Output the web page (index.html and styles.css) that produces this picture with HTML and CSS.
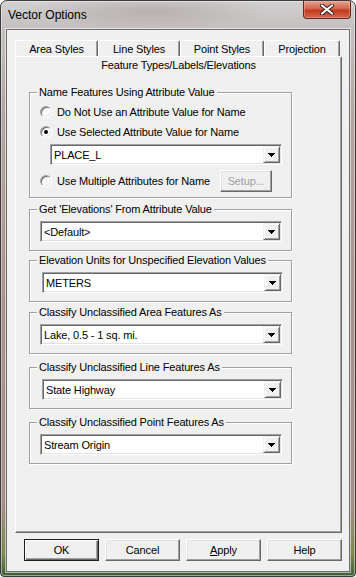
FILE: index.html
```html
<!DOCTYPE html>
<html lang="en">
<head>
    <meta charset="UTF-8">
    <meta name="viewport" content="width=device-width, initial-scale=1.0">
    <title>Vector Options</title>
    <link rel="stylesheet" href="styles.css">
</head>
<body>
    <div class="window">
        <div class="titlebar">
            <span class="title">Vector Options</span>
            <button class="close" aria-label="Close">
                <svg width="14" height="11" viewBox="0 0 14 11">
                    <path d="M2 1.5l10 8M12 1.5l-10 8" stroke="#3a1d18" stroke-width="4" stroke-linecap="round"/>
                    <path d="M2 1.5l10 8M12 1.5l-10 8" stroke="#fff" stroke-width="2.2" stroke-linecap="round"/>
                </svg>
            </button>
        </div>

        <div class="client">
            <div class="tabs">
                <div class="tab-row back">
                    <div class="tab">Area Styles</div>
                    <div class="tab">Line Styles</div>
                    <div class="tab">Point Styles</div>
                    <div class="tab">Projection</div>
                </div>
                <div class="tab-row front">
                    <div class="tab active">Feature Types/Labels/Elevations</div>
                </div>

                <div class="panel">
                    <fieldset class="group group-names">
                        <legend>Name Features Using Attribute Value</legend>
                        <div class="radio-row first">
                            <span class="radio"></span>
                            <span>Do Not Use an Attribute Value for Name</span>
                        </div>
                        <div class="radio-row">
                            <span class="radio checked"></span>
                            <span>Use Selected Attribute Value for Name</span>
                        </div>
                        <div class="combo indent">
                            <span class="combo-value">PLACE_L</span>
                            <span class="combo-arrow"><svg width="7" height="4" viewBox="0 0 7 4"><path d="M0 0h7v1h-1v1h-1v1h-1v1h-1v-1h-1v-1h-1v-1h-1z"/></svg></span>
                        </div>
                        <div class="radio-row multi">
                            <span class="radio"></span>
                            <span>Use Multiple Attributes for Name</span>
                            <button class="btn setup" disabled>Setup...</button>
                        </div>
                    </fieldset>

                    <fieldset class="group">
                        <legend>Get 'Elevations' From Attribute Value</legend>
                        <div class="combo">
                            <span class="combo-value">&lt;Default&gt;</span>
                            <span class="combo-arrow"><svg width="7" height="4" viewBox="0 0 7 4"><path d="M0 0h7v1h-1v1h-1v1h-1v1h-1v-1h-1v-1h-1v-1h-1z"/></svg></span>
                        </div>
                    </fieldset>

                    <fieldset class="group">
                        <legend>Elevation Units for Unspecified Elevation Values</legend>
                        <div class="combo shifted">
                            <span class="combo-value">METERS</span>
                            <span class="combo-arrow"><svg width="7" height="4" viewBox="0 0 7 4"><path d="M0 0h7v1h-1v1h-1v1h-1v1h-1v-1h-1v-1h-1v-1h-1z"/></svg></span>
                        </div>
                    </fieldset>

                    <fieldset class="group">
                        <legend>Classify Unclassified Area Features As</legend>
                        <div class="combo">
                            <span class="combo-value">Lake, 0.5 - 1 sq. mi.</span>
                            <span class="combo-arrow"><svg width="7" height="4" viewBox="0 0 7 4"><path d="M0 0h7v1h-1v1h-1v1h-1v1h-1v-1h-1v-1h-1v-1h-1z"/></svg></span>
                        </div>
                    </fieldset>

                    <fieldset class="group">
                        <legend>Classify Unclassified Line Features As</legend>
                        <div class="combo shifted">
                            <span class="combo-value">State Highway</span>
                            <span class="combo-arrow"><svg width="7" height="4" viewBox="0 0 7 4"><path d="M0 0h7v1h-1v1h-1v1h-1v1h-1v-1h-1v-1h-1v-1h-1z"/></svg></span>
                        </div>
                    </fieldset>

                    <fieldset class="group">
                        <legend>Classify Unclassified Point Features As</legend>
                        <div class="combo">
                            <span class="combo-value">Stream Origin</span>
                            <span class="combo-arrow"><svg width="7" height="4" viewBox="0 0 7 4"><path d="M0 0h7v1h-1v1h-1v1h-1v1h-1v-1h-1v-1h-1v-1h-1z"/></svg></span>
                        </div>
                    </fieldset>
                </div>
            </div>

            <div class="buttons">
                <button class="btn default">OK</button>
                <button class="btn">Cancel</button>
                <button class="btn"><u>A</u>pply</button>
                <button class="btn">Help</button>
            </div>
        </div>
    </div>
</body>
</html>
```

FILE: styles.css
```css
* {
    box-sizing: border-box;
}

body {
    margin: 0;
    font-family: "Liberation Sans", Arial, sans-serif;
    font-size: 11px;
    letter-spacing: -0.15px;
    color: #000;
}

/* Aero glass frame */
.window {
    width: 356px;
    height: 577px;
    display: flex;
    flex-direction: column;
    padding: 0 5px 4px;
    border: 1px solid #3b3b3b;
    border-radius: 7px 7px 4px 4px;
    background:
        radial-gradient(ellipse 120px 18px at 150px 10px, rgba(140, 130, 125, 0.35), transparent),
        linear-gradient(180deg, #d2d0d1 0%, #c4bfbe 5%, #b3a5a0 20%, #a8928b 55%, #a38d86 88%, #7f8a4e 96%, #3f5f3a 100%);
    box-shadow: inset 0 0 0 1px rgba(255, 255, 255, 0.45);
}

.titlebar {
    height: 28px;
    display: flex;
    justify-content: space-between;
    align-items: flex-start;
    padding-left: 2px;
}

.title {
    margin-top: 7px;
    font-size: 12px;
    line-height: 14px;
    letter-spacing: 0;
}

.close {
    width: 48px;
    height: 18px;
    margin-right: -1px;
    padding: 0;
    display: flex;
    align-items: center;
    justify-content: center;
    border: 1px solid #5b2a22;
    border-top: none;
    border-radius: 0 0 4px 4px;
    background: linear-gradient(180deg, #e6a595 0%, #d3634c 45%, #c1391f 55%, #d26a52 100%);
    box-shadow: inset 0 0 0 1px rgba(255, 200, 190, 0.35);
}

/* Dialog client area */
.client {
    flex: 1;
    display: flex;
    flex-direction: column;
    padding: 10px 7px 10px 8px;
    background: #f0f0f0;
    border: 1px solid #6e6e6e;
    box-shadow: 0 0 0 1px rgba(255, 255, 255, 0.55);
}

.tabs {
    display: flex;
    flex-direction: column;
}

.tab-row {
    display: flex;
}

.tab {
    display: flex;
    align-items: center;
    justify-content: center;
    background: #f0f0f0;
    border-top: 1px solid #fff;
    border-left: 1px solid #fff;
    border-right: 1px solid #696969;
    border-radius: 2px 2px 0 0;
    box-shadow: inset -1px 0 #a0a0a0;
}

.back {
    height: 16px;
}

.back .tab:nth-child(1) { width: 83px; }
.back .tab:nth-child(2) { width: 82px; }
.back .tab:nth-child(3) { width: 84px; }
.back .tab:nth-child(4) { width: 76px; }

.front {
    height: 17px;
}

.tab.active {
    width: 100%;
    padding-bottom: 1px;
}

.panel {
    height: 460px;
    display: flex;
    flex-direction: column;
    padding: 12px 0 0 13px;
    border-left: 1px solid #fff;
    border-right: 1px solid #696969;
    border-bottom: 1px solid #696969;
    box-shadow: inset -1px -1px #a0a0a0;
}

/* Group boxes */
.group {
    width: 263px;
    min-width: 0;
    margin: 0;
    padding: 0 0 8px;
    border: 1px solid #a0a0a0;
    box-shadow: inset 1px 1px #fff, 1px 1px #fff;
}

.group legend {
    margin-left: 7px;
    padding: 0 2px;
    line-height: 14px;
    background: #f0f0f0;
}

.panel .group:nth-child(2) { margin-top: 4px; }
.panel .group:nth-child(3) { margin-top: 2px; }
.panel .group:nth-child(4) { margin-top: 3px; }
.panel .group:nth-child(5) { margin-top: 6px; }
.panel .group:nth-child(6) { margin-top: 6px; }

.group-names {
    padding-bottom: 5px;
}

.radio-row {
    height: 18px;
    margin-top: 2px;
    padding-left: 10px;
    display: flex;
    align-items: center;
    gap: 5px;
}

.radio-row.first {
    margin-top: 4px;
}

.radio-row.multi {
    height: 22px;
    margin-top: 5px;
    padding-right: 19px;
}

.radio {
    position: relative;
    width: 12px;
    height: 12px;
    flex: none;
    border-radius: 50%;
    background: #fff;
    border: 1px solid;
    border-color: #a0a0a0 #fff #fff #a0a0a0;
    box-shadow: inset 1px 1px #696969, inset -1px -1px #e3e3e3;
}

.radio.checked::after {
    content: '';
    position: absolute;
    left: 3px;
    top: 3px;
    width: 4px;
    height: 4px;
    border-radius: 50%;
    background: #000;
}

/* Combo boxes */
.combo {
    height: 21px;
    margin: 5px 9px 0 10px;
    padding: 1px;
    display: flex;
    background: #fff;
    border: 1px solid;
    border-color: #a0a0a0 #fff #fff #a0a0a0;
    box-shadow: inset 1px 1px #696969, inset -1px -1px #e3e3e3;
}

.combo.indent {
    margin: 3px 9px 0 20px;
}

.combo.shifted {
    margin-left: 12px;
    margin-right: 8px;
}

.combo-value {
    flex: 1;
    display: flex;
    align-items: center;
    padding-left: 2px;
}

.combo-arrow {
    width: 17px;
    display: flex;
    align-items: center;
    justify-content: center;
    background: #f0f0f0;
    border: 1px solid;
    border-color: #f0f0f0 #696969 #696969 #f0f0f0;
    box-shadow: inset 1px 1px #fff, inset -1px -1px #a0a0a0;
}

/* Push buttons */
.btn {
    width: 75px;
    height: 22px;
    padding: 0;
    font: inherit;
    letter-spacing: inherit;
    color: #000;
    background: #f0f0f0;
    border: 1px solid;
    border-color: #fff #696969 #696969 #fff;
    box-shadow: inset -1px -1px #a0a0a0, inset 1px 1px #e3e3e3;
}

.btn.default {
    border-color: #1e1e1e;
    box-shadow: inset 1px 1px #fff, inset -1px -1px #696969, inset -2px -2px #a0a0a0;
}

.btn.setup {
    width: 52px;
    margin-left: auto;
    color: #a0a0a0;
}

.buttons {
    margin-top: 6px;
    display: flex;
    justify-content: flex-end;
    gap: 6px;
}
```
